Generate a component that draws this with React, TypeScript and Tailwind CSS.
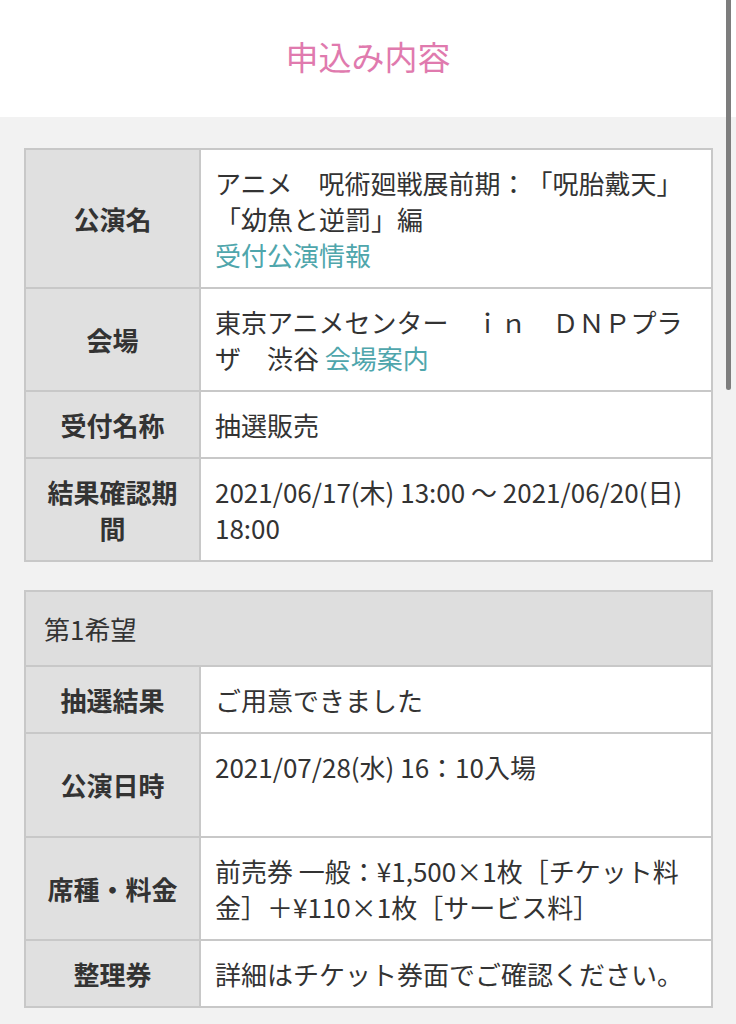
import React from "react";

const FONT = { fontFamily: '"Noto Sans CJK JP", "Noto Sans", sans-serif' };

type Row = { label: string; value: React.ReactNode; tall?: boolean };

const summary: Row[] = [
  {
    label: "公演名",
    value: (
      <>
        アニメ　呪術廻戦展前期：「呪胎戴天」「幼魚と逆罰」編
        <br />
        <span className="text-[#4fa6ac]">受付公演情報</span>
      </>
    ),
  },
  {
    label: "会場",
    value: (
      <>
        東京アニメセンター　ｉｎ　ＤＮＰプラザ　渋谷 <span className="text-[#4fa6ac]">会場案内</span>
      </>
    ),
  },
  { label: "受付名称", value: "抽選販売" },
  { label: "結果確認期間", value: "2021/06/17(木) 13:00 ～ 2021/06/20(日) 18:00" },
];

const choice: Row[] = [
  { label: "抽選結果", value: "ご用意できました" },
  { label: "公演日時", value: "2021/07/28(水) 16：10入場", tall: true },
  { label: "席種・料金", value: "前売券 一般：¥1,500×1枚［チケット料金］＋¥110×1枚［サービス料］" },
  { label: "整理券", value: "詳細はチケット券面でご確認ください。" },
];

function InfoRow({ row }: { row: Row }) {
  return (
    <tr className={row.tall ? "h-[104px]" : ""}>
      <th className="border-2 border-[#c8c8c8] bg-[#e0e0e0] px-5 py-[14.5px] text-center align-middle font-bold">
        {row.label}
      </th>
      <td className="border-2 border-[#c8c8c8] bg-white py-[14.5px] pl-[14px] pr-3 align-top">{row.value}</td>
    </tr>
  );
}

function InfoTable({ children }: { children: React.ReactNode }) {
  return (
    <table className="w-[689px] table-fixed border-collapse border-2 border-[#c8c8c8]">
      <colgroup>
        <col className="w-[175px]" />
        <col />
      </colgroup>
      <tbody>{children}</tbody>
    </table>
  );
}

export default function App() {
  return (
    <div
      className="relative min-h-[1024px] bg-[#f2f2f2] text-[26px] leading-[36px] text-[#333] [text-spacing-trim:space-all]"
      style={FONT}
    >
      {/* Header */}
      <div className="flex h-[117px] items-center justify-center bg-white">
        <h1 className="-mt-1 text-[33px] leading-none text-[#e07aae]">申込み内容</h1>
      </div>

      <div className="flex flex-col gap-[28px] px-6 pt-[31px]">
        <InfoTable>
          {summary.map((r) => (
            <InfoRow key={r.label} row={r} />
          ))}
        </InfoTable>

        <InfoTable>
          <tr className="h-[75px]">
            <td colSpan={2} className="border-2 border-[#c8c8c8] bg-[#dedede] pl-[18px] align-middle">
              第1希望
            </td>
          </tr>
          {choice.map((r) => (
            <InfoRow key={r.label} row={r} />
          ))}
        </InfoTable>
      </div>

      {/* scrollbar overlay */}
      <div className="absolute right-[5px] top-0 h-[390px] w-[5px] rounded-b-full bg-[#7d7d7d]" />
    </div>
  );
}
